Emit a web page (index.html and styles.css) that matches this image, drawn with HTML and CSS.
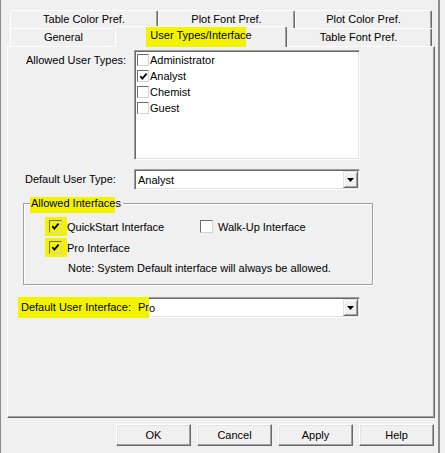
FILE: index.html
```html
<!DOCTYPE html>
<html lang="en">
<head>
    <meta charset="UTF-8">
    <title>User Types/Interface</title>
    <link rel="stylesheet" href="styles.css">
</head>
<body>
    <div class="dialog">
        <!-- Tab strip, two rows -->
        <div class="tabs">
            <div class="tab-row">
                <div class="tab tab-color">Table Color Pref.</div>
                <div class="tab tab-plotfont">Plot Font Pref.</div>
                <div class="tab tab-plotcolor">Plot Color Pref.</div>
            </div>
            <div class="tab-row">
                <div class="tab tab-general">General</div>
                <div class="tab tab-active"><span class="mark mark-tab">User Types/Interfac</span>e</div>
                <div class="tab tab-tablefont">Table Font Pref.</div>
            </div>
        </div>

        <div class="panel">
            <div class="field field-types">
                <div class="field-label">Allowed User Types:</div>
                <div class="listbox">
                    <div class="list-item"><span class="check"></span>Administrator</div>
                    <div class="list-item"><span class="check"><svg width="9" height="9" viewBox="0 0 9 9"><path d="M1.3 4.2 L3.4 6.6 L7.6 1.6" fill="none" stroke="#000" stroke-width="1.8"/></svg></span>Analyst</div>
                    <div class="list-item"><span class="check"></span>Chemist</div>
                    <div class="list-item"><span class="check"></span>Guest</div>
                </div>
            </div>

            <div class="field field-type">
                <div class="field-label">Default User Type:</div>
                <div class="combo">
                    <span class="combo-text">Analyst</span>
                    <span class="combo-btn"><svg width="7" height="4" viewBox="0 0 7 4"><path d="M0 0 H7 L3.5 4 Z" fill="#000"/></svg></span>
                </div>
            </div>

            <div class="group">
                <div class="group-legend"><span class="mark mark-legend">Allowed Interface</span>s</div>
                <div class="group-row group-row-first">
                    <div class="opt opt-quick">
                        <span class="hl-box"><span class="check check-lg check-hl"><svg width="9" height="9" viewBox="0 0 9 9"><path d="M1.3 4.2 L3.4 6.6 L7.6 1.6" fill="none" stroke="#000" stroke-width="1.8"/></svg></span></span>QuickStart Interface
                    </div>
                    <div class="opt">
                        <span class="check check-lg"></span>Walk-Up Interface
                    </div>
                </div>
                <div class="group-row">
                    <div class="opt">
                        <span class="hl-box"><span class="check check-lg check-hl"><svg width="9" height="9" viewBox="0 0 9 9"><path d="M1.3 4.2 L3.4 6.6 L7.6 1.6" fill="none" stroke="#000" stroke-width="1.8"/></svg></span></span>Pro Interface
                    </div>
                </div>
                <div class="group-note">Note: System Default interface will always be allowed.</div>
            </div>

            <div class="field field-ui">
                <div class="field-label mark">Default User Interface:</div>
                <div class="combo">
                    <span class="combo-text"><span class="mark mark-combo">Pr</span>o</span>
                    <span class="combo-btn"><svg width="7" height="4" viewBox="0 0 7 4"><path d="M0 0 H7 L3.5 4 Z" fill="#000"/></svg></span>
                </div>
            </div>
        </div>

        <div class="buttons">
            <button class="btn">OK</button>
            <button class="btn">Cancel</button>
            <button class="btn">Apply</button>
            <button class="btn">Help</button>
        </div>
    </div>
</body>
</html>
```

FILE: styles.css
```css
/* General */
* {
    box-sizing: border-box;
}
body {
    margin: 0;
    background: #f0f0f0;
    font-family: "Liberation Sans", Arial, sans-serif;
    font-size: 11px;
    color: #000;
}
.dialog {
    width: 440px;
    height: 453px;
    border-left: 1px solid #8c8c8c;
    border-right: 2px solid #8c8c8c;
}
.mark {
    background: #f3f300;
}

/* Tabs */
.tabs {
    padding: 10px 0 0 9px;
}
.tab-row {
    display: flex;
    height: 18px;
}
.tab {
    height: 18px;
    background: #f0f0f0;
    border-top: 1px solid #fff;
    border-left: 1px solid #fff;
    border-right: 1px solid #696969;
    border-radius: 2px 2px 0 0;
    box-shadow: inset -1px 0 #a0a0a0;
    text-align: center;
    line-height: 17px;
    white-space: nowrap;
}
.tab-color { width: 148px; }
.tab-plotfont { width: 137px; }
.tab-plotcolor { width: 137px; }
.tab-general { width: 107px; }
.tab-tablefont { width: 147px; }
.tab-active {
    position: relative;
    z-index: 1;
    width: 172px;
    height: 21px;
    margin: -2px -2px 0;
}
.mark-tab {
    display: inline-block;
    padding: 1px 0 5px 4px;
    margin-left: -4px;
    line-height: 14px;
}

/* Panel */
.panel {
    margin-left: 6px;
    width: 428px;
    height: 372px;
    border-top: 1px solid #fff;
    border-left: 1px solid #fff;
    border-right: 1px solid #696969;
    border-bottom: 1px solid #696969;
    box-shadow: inset -1px -1px #a0a0a0;
}
.field {
    display: flex;
}
.field-types {
    margin-top: 3px;
    padding-left: 18px;
}
.field-types .field-label {
    width: 108px;
    padding-top: 4px;
    line-height: 13px;
}
.field-type {
    margin-top: 9px;
    padding-left: 17px;
}
.field-type .field-label {
    width: 109px;
    line-height: 21px;
}
.field-ui {
    margin-top: 12px;
    padding-left: 10px;
}
.field-ui .field-label {
    width: 116px;
    height: 21px;
    padding-left: 3px;
    line-height: 21px;
}

/* Sunken controls */
.listbox,
.combo {
    width: 226px;
    background: #fff;
    border: 1px solid;
    border-color: #a0a0a0 #fff #fff #a0a0a0;
    box-shadow: inset 1px 1px #696969, inset -1px -1px #e3e3e3;
}
.listbox {
    height: 110px;
    padding: 1px 0 0 2px;
}
.list-item {
    display: flex;
    align-items: center;
    height: 16px;
}
.check {
    display: flex;
    align-items: center;
    justify-content: center;
    width: 12px;
    height: 12px;
    margin-right: 1px;
    background: #fff;
    border: 1px solid;
    border-color: #6d6d6d #d4d4d4 #d4d4d4 #6d6d6d;
}
.check-lg {
    width: 13px;
    height: 13px;
    margin-right: 5px;
}
.check-hl {
    background: #f3f300;
}
.combo {
    display: flex;
    align-items: center;
    height: 21px;
}
.combo-text {
    display: flex;
    align-self: stretch;
    align-items: center;
    padding-left: 3px;
}
.mark-combo {
    align-self: stretch;
    margin: -1px 0 -1px -4px;
    padding-left: 4px;
    line-height: 21px;
}
.combo-btn {
    display: flex;
    align-items: center;
    justify-content: center;
    width: 15px;
    height: 17px;
    margin-left: auto;
    margin-right: 1px;
    background: #f0f0f0;
    border: 1px solid;
    border-color: #e3e3e3 #696969 #696969 #e3e3e3;
    box-shadow: inset 1px 1px #fff, inset -1px -1px #a0a0a0;
}

/* Group box */
.group {
    margin: 13px 0 0 15px;
    width: 350px;
    height: 82px;
    border: 1px solid #a0a0a0;
    box-shadow: inset 1px 1px #fff, 1px 1px #fff;
}
.group-legend {
    width: fit-content;
    height: 13px;
    margin: -7px 0 0 6px;
    padding-right: 2px;
    background: #f0f0f0;
    line-height: 13px;
}
.mark-legend {
    display: inline-block;
    padding: 0 0 3px 1px;
    vertical-align: top;
}
.group-row {
    display: flex;
    align-items: center;
    height: 21px;
    padding-left: 25px;
}
.group-row-first {
    margin-top: 6px;
}
.opt {
    display: flex;
    align-items: center;
}
.opt-quick {
    width: 151px;
}
.hl-box {
    display: flex;
    padding: 3px 0 3px 4px;
    margin: -3px 0 -3px -4px;
    background: #f3f300;
}
.group-note {
    margin-top: 4px;
    padding-left: 44px;
    line-height: 13px;
}

/* Buttons */
.buttons {
    display: flex;
    justify-content: flex-end;
    gap: 6px;
    margin-top: 6px;
    padding-right: 4px;
}
.btn {
    width: 75px;
    height: 22px;
    padding: 0;
    font-family: inherit;
    font-size: 11px;
    color: #000;
    background: #f0f0f0;
    border: 1px solid;
    border-color: #fff #696969 #696969 #fff;
    box-shadow: inset -1px -1px #a0a0a0, inset 1px 1px #e3e3e3;
}
```
